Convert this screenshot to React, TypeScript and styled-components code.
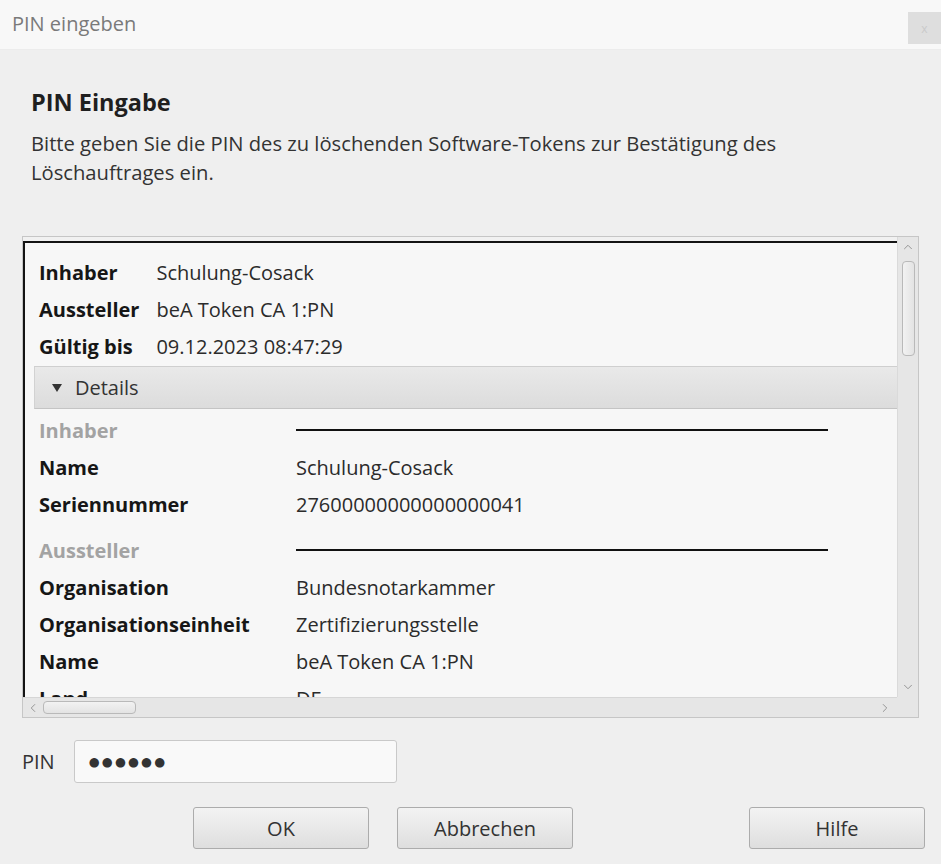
import React from "react";
import styled, { createGlobalStyle } from "styled-components";
import { ChevronUp, ChevronDown, ChevronLeft, ChevronRight } from "lucide-react";

const Global = createGlobalStyle`
  html, body { margin: 0; padding: 0; }
  body {
    background: #efefef;
    font-family: "Open Sans", "Noto Sans", "Liberation Sans", sans-serif;
    color: #2b2b2b;
  }
`;

const Window = styled.div`
  width: 941px;
  height: 864px;
  display: flex;
  flex-direction: column;
  background: #efefef;
  overflow: hidden;
`;

const TitleBar = styled.div`
  height: 50px;
  flex: none;
  display: flex;
  align-items: flex-start;
  justify-content: space-between;
  background: #f8f8f8;
  border-bottom: 1px solid #ececec;
  box-sizing: border-box;
`;

const Title = styled.div`
  margin: 10px 0 0 12px;
  font-size: 20px;
  line-height: 28px;
  color: #7a7a7a;
`;

const CloseBox = styled.div`
  margin-top: 12px;
  width: 33px;
  height: 32px;
  background: #dedede;
  color: #cacaca;
  font-size: 12px;
  display: flex;
  align-items: center;
  justify-content: center;
`;

const Body = styled.div`
  flex: 1;
  display: flex;
  flex-direction: column;
  padding: 38px 16px 0 22px;
`;

const Heading = styled.h1`
  margin: 0 0 0 9px;
  font-size: 23.5px;
  line-height: 28px;
  font-weight: 700;
  color: #1f1f1f;
`;

const Description = styled.p`
  margin: 13px 0 0 9px;
  width: 770px;
  font-size: 20.2px;
  line-height: 29px;
  color: #333;
`;

const ScrollPane = styled.div`
  margin-top: 49px;
  margin-right: 6px;
  height: 482px;
  border: 1px solid #c6c6c6;
  display: grid;
  grid-template-columns: 1fr 21px;
  grid-template-rows: 1fr 20px;
  box-sizing: border-box;
  background: #f1f1f1;
`;

const Viewport = styled.div`
  margin-top: 4px;
  border-top: 2px solid #141414;
  border-left: 2px solid #141414;
  background: #f7f7f7;
  overflow: hidden;
  padding: 11px 0 0 0;
`;

const Summary = styled.div`
  display: grid;
  grid-template-columns: max-content 1fr;
  column-gap: 17px;
  padding-left: 14px;
`;

const SumLabel = styled.div`
  font-weight: 700;
  font-size: 20px;
  line-height: 37px;
  color: #161616;
`;

const SumValue = styled.div`
  font-size: 20px;
  line-height: 37px;
  color: #2b2b2b;
`;

const DetailsHeader = styled.div`
  margin: 1px 0 0 9px;
  height: 43px;
  box-sizing: border-box;
  border-top: 1px solid #cfcfcf;
  border-bottom: 1px solid #c4c4c4;
  border-left: 1px solid #d2d2d2;
  background: linear-gradient(#e9e9e9, #dcdcdc);
  display: flex;
  align-items: center;
  gap: 13px;
  padding-left: 17px;
  font-size: 20px;
  color: #333;
`;

const Triangle = styled.span`
  width: 0;
  height: 0;
  border-left: 5px solid transparent;
  border-right: 5px solid transparent;
  border-top: 8px solid #333;
`;

const DetailGrid = styled.div`
  display: grid;
  grid-template-columns: 257px 532px;
  padding: 3px 0 0 14px;
`;

const DLabel = styled.div<{ $group?: boolean }>`
  font-size: 20px;
  font-weight: 700;
  line-height: 37px;
  color: ${(p) => (p.$group ? "#a3a3a3" : "#161616")};
`;

const DValue = styled.div`
  font-size: 20px;
  line-height: 37px;
  color: #2b2b2b;
  white-space: nowrap;
`;

const Rule = styled.div`
  align-self: center;
  height: 2px;
  background: #111;
  margin-top: -2px;
`;

const Gap = styled.div`
  grid-column: 1 / -1;
  height: 9px;
`;

const VBar = styled.div`
  display: flex;
  flex-direction: column;
  align-items: center;
  background: #e6e6e6;
  border-left: 1px solid #dadada;
`;

const HBar = styled.div`
  display: flex;
  align-items: center;
  background: #e6e6e6;
  border-top: 1px solid #d6d6d6;
`;

const Arrow = styled.div<{ $w?: number; $h?: number }>`
  color: #8a8a8a;
  display: flex;
  align-items: center;
  justify-content: center;
  flex: none;
  width: ${(p) => (p.$w ? `${p.$w}px` : "auto")};
  height: ${(p) => (p.$h ? `${p.$h}px` : "auto")};
`;

const VThumb = styled.div`
  width: 11px;
  height: 93px;
  margin-top: 4px;
  border: 1px solid #b9b9b9;
  border-radius: 4px;
  background: linear-gradient(90deg, #f2f2f2, #e3e3e3);
`;

const HThumb = styled.div`
  width: 91px;
  height: 11px;
  border: 1px solid #b9b9b9;
  border-radius: 4px;
  background: linear-gradient(#f2f2f2, #e3e3e3);
`;

const Spacer = styled.div`
  flex: 1;
`;

const Corner = styled.div`
  background: #e6e6e6;
`;

const PinRow = styled.div`
  margin-top: 22px;
  display: flex;
  align-items: center;
  gap: 19px;
`;

const PinLabel = styled.label`
  font-size: 20px;
  color: #333;
`;

const PinInput = styled.div`
  width: 323px;
  height: 43px;
  box-sizing: border-box;
  border: 1px solid #c9c9c9;
  border-radius: 3px;
  background: #f9f9f9;
  display: flex;
  align-items: center;
  padding-left: 14px;
  font-family: "DejaVu Sans", sans-serif;
  font-size: 12.5px;
  letter-spacing: 2.2px;
  color: #333;
`;

const ButtonRow = styled.div`
  margin-top: 24px;
  display: flex;
  gap: 28px;
  padding-left: 171px;
`;

const Button = styled.button<{ $push?: boolean }>`
  width: 176px;
  height: 42px;
  border: 1px solid #acacac;
  border-radius: 3px;
  background: linear-gradient(#f3f3f3, #dedede);
  font-family: inherit;
  font-size: 20px;
  color: #333;
  margin-left: ${(p) => (p.$push ? "auto" : "0")};
`;

const summary = [
  ["Inhaber", "Schulung-Cosack"],
  ["Aussteller", "beA Token CA 1:PN"],
  ["Gültig bis", "09.12.2023 08:47:29"],
];

export default function App() {
  return (
    <>
      <Global />
      <Window>
        <TitleBar>
          <Title>PIN eingeben</Title>
          <CloseBox>x</CloseBox>
        </TitleBar>
        <Body>
          <Heading>PIN Eingabe</Heading>
          <Description>
            Bitte geben Sie die PIN des zu löschenden Software-Tokens zur Bestätigung des
            Löschauftrages ein.
          </Description>
          <ScrollPane>
            <Viewport>
              <Summary>
                {summary.map(([l, v]) => (
                  <React.Fragment key={l}>
                    <SumLabel>{l}</SumLabel>
                    <SumValue>{v}</SumValue>
                  </React.Fragment>
                ))}
              </Summary>
              <DetailsHeader>
                <Triangle />
                Details
              </DetailsHeader>
              <DetailGrid>
                <DLabel $group>Inhaber</DLabel>
                <Rule />
                <DLabel>Name</DLabel>
                <DValue>Schulung-Cosack</DValue>
                <DLabel>Seriennummer</DLabel>
                <DValue>27600000000000000041</DValue>
                <Gap />
                <DLabel $group>Aussteller</DLabel>
                <Rule />
                <DLabel>Organisation</DLabel>
                <DValue>Bundesnotarkammer</DValue>
                <DLabel>Organisationseinheit</DLabel>
                <DValue>Zertifizierungsstelle</DValue>
                <DLabel>Name</DLabel>
                <DValue>beA Token CA 1:PN</DValue>
                <DLabel>Land</DLabel>
                <DValue>DE</DValue>
              </DetailGrid>
            </Viewport>
            <VBar>
              <Arrow $h={20}>
                <ChevronUp size={14} strokeWidth={1.5} />
              </Arrow>
              <VThumb />
              <Spacer />
              <Arrow $h={20}>
                <ChevronDown size={14} strokeWidth={1.5} />
              </Arrow>
            </VBar>
            <HBar>
              <Arrow $w={20}>
                <ChevronLeft size={14} strokeWidth={1.5} />
              </Arrow>
              <HThumb />
              <Spacer />
              <Arrow $w={24}>
                <ChevronRight size={14} strokeWidth={1.5} />
              </Arrow>
            </HBar>
            <Corner />
          </ScrollPane>
          <PinRow>
            <PinLabel>PIN</PinLabel>
            <PinInput>●●●●●●</PinInput>
          </PinRow>
          <ButtonRow>
            <Button>OK</Button>
            <Button>Abbrechen</Button>
            <Button $push>Hilfe</Button>
          </ButtonRow>
        </Body>
      </Window>
    </>
  );
}
